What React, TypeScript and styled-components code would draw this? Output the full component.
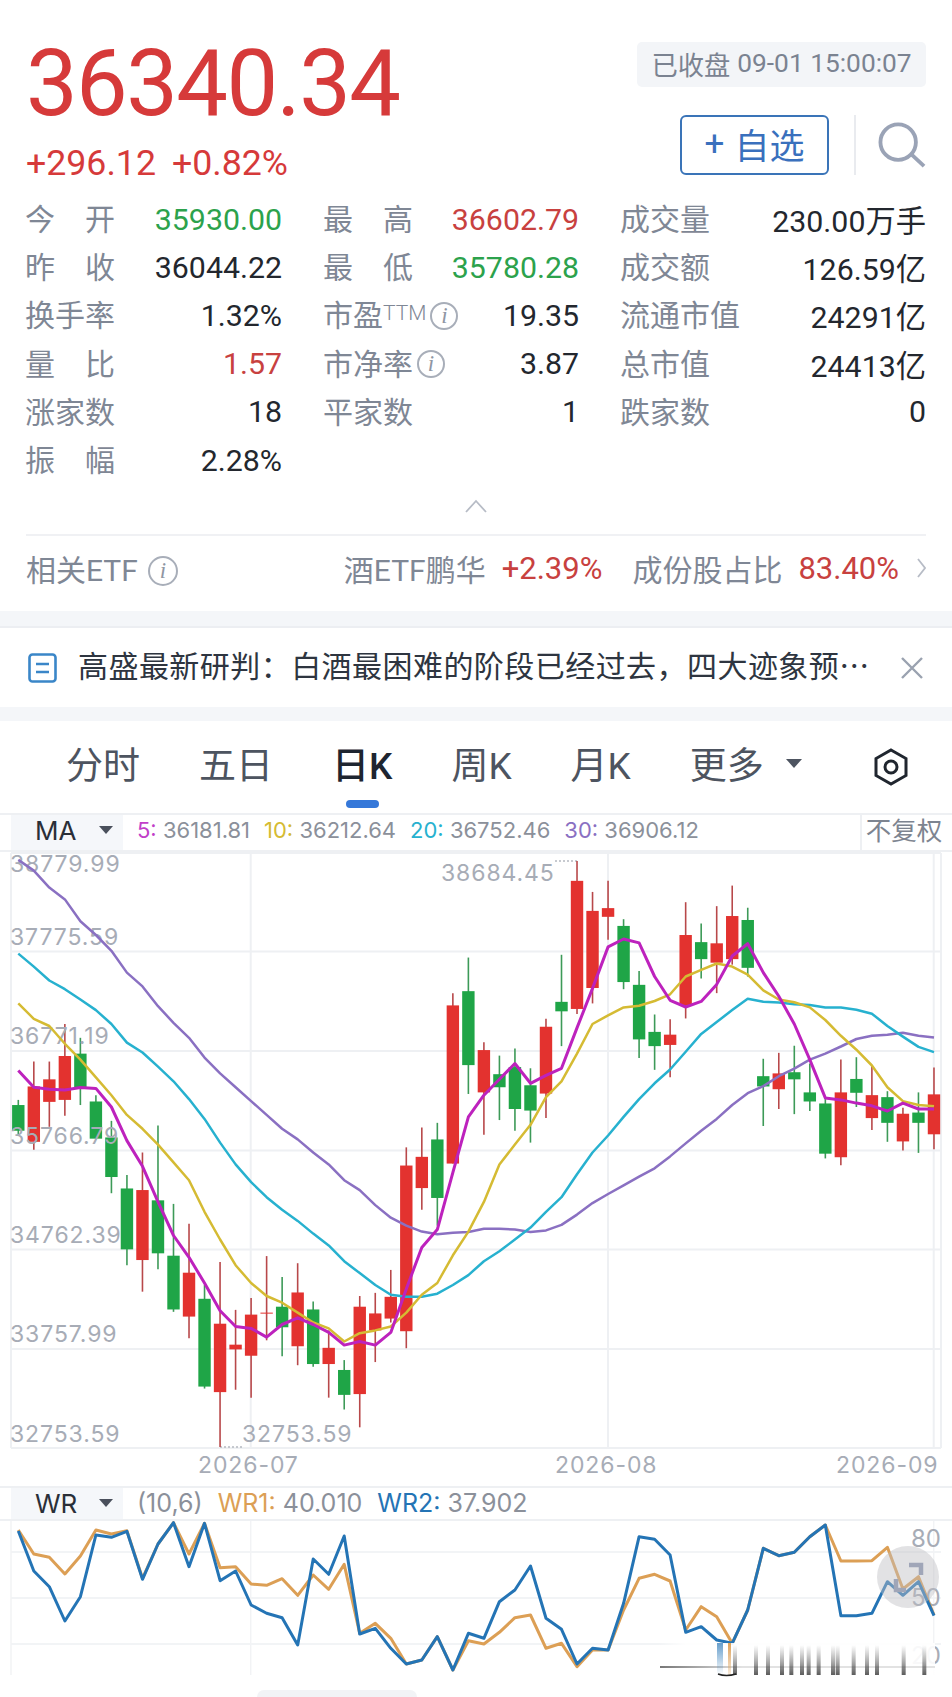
import styled, { createGlobalStyle } from "styled-components";

const GlobalStyle = createGlobalStyle`
  html, body {
    margin: 0;
    padding: 0;
    background: #fff;
    font-family: Roboto, "Noto Sans CJK SC", sans-serif;
  }
`;

const RED = "#d63a3a";
const GREEN = "#2ca24c";
const LABEL = "#7f8795";
const CHART_FONT = 'Inter, "Noto Sans CJK SC", sans-serif';

type Tone = "up" | "down" | "plain";

const toneColor = (tone?: Tone) =>
  tone === "up" ? "#c8413f" : tone === "down" ? GREEN : "#23272e";

const Page = styled.div`
  position: relative;
  width: 952px;
  height: 1697px;
  overflow: hidden;
  background: #fff;
`;

const QuoteHead = styled.header`
  height: 195px;
  padding: 42px 26px 0;
  box-sizing: border-box;
  display: flex;
  justify-content: space-between;
`;

const PriceBlock = styled.div`
  display: flex;
  flex-direction: column;
`;

const Price = styled.div`
  font-size: 92px;
  line-height: 82px;
  letter-spacing: -1.6px;
  color: ${RED};
  margin-top: 1px;
`;

const ChangeRow = styled.div`
  display: flex;
  gap: 16px;
  margin-top: 18px;
  font-size: 35.7px;
  line-height: 40px;
  color: ${RED};
`;

const HeadRight = styled.div`
  display: flex;
  flex-direction: column;
  align-items: flex-end;
`;

const StatusBadge = styled.div`
  width: 289px;
  height: 45px;
  box-sizing: border-box;
  padding-bottom: 3px;
  display: flex;
  align-items: center;
  justify-content: center;
  gap: 7px;
  background: #f3f5f8;
  border-radius: 5px;
  font-size: 26.3px;
  color: #7b8391;
  white-space: nowrap;
`;

const HeadActions = styled.div`
  display: flex;
  align-items: center;
  margin-top: 28px;
`;

const WatchButton = styled.button`
  width: 149px;
  height: 60px;
  border: 2px solid #3a74b8;
  border-radius: 6px;
  background: #fff;
  color: #3a70bd;
  font-family: inherit;
  font-size: 35px;
  padding: 0 0 4px;
  display: flex;
  align-items: center;
  justify-content: center;
  gap: 10px;
`;

const VDivider = styled.span`
  width: 2px;
  height: 60px;
  background: #e9ebef;
  margin: 0 22px 0 25px;
`;

const StatGrid = styled.section`
  display: grid;
  grid-template-columns: 256px 255px 305px;
  grid-auto-rows: 48.2px;
  column-gap: 42px;
  padding: 0 26px;
`;

const Stat = styled.div`
  display: flex;
  align-items: center;
  justify-content: space-between;
  white-space: nowrap;
`;

const StatLabel = styled.span<{ $spaced?: boolean }>`
  display: inline-flex;
  align-items: center;
  font-size: 30px;
  color: ${LABEL};
  margin-left: -1px;
  padding-bottom: 4px;
  width: ${(p) => (p.$spaced ? "90px" : "auto")};
  justify-content: ${(p) => (p.$spaced ? "space-between" : "flex-start")};
`;

const StatValue = styled.span<{ $tone?: Tone }>`
  font-size: 30.3px;
  color: ${(p) => toneColor(p.$tone)};
`;

const Sup = styled.sup`
  font-size: 21px;
  line-height: 1;
  font-weight: 300;
  vertical-align: 10px;
`;

const InfoDot = styled.i<{ $size?: number; $gap?: number }>`
  display: inline-flex;
  align-items: center;
  justify-content: center;
  width: ${(p) => p.$size ?? 28}px;
  height: ${(p) => p.$size ?? 28}px;
  margin-left: ${(p) => p.$gap ?? 4}px;
  margin-top: 5px;
  box-sizing: border-box;
  border: 2px solid #a8aeb9;
  border-radius: 50%;
  color: #8f96a3;
  font-family: "Liberation Serif", serif;
  font-size: 23px;
`;

const CollapseRow = styled.div`
  height: 51px;
  box-sizing: border-box;
  padding-bottom: 4px;
  display: flex;
  justify-content: center;
  align-items: center;
  margin-top: -1px;
`;

const EtfRow = styled.div`
  height: 77px;
  box-sizing: border-box;
  margin: 0 26px;
  padding-bottom: 11px;
  border-top: 2px solid #f0f1f4;
  display: flex;
  align-items: center;
  font-size: 30px;
  color: ${LABEL};
  white-space: nowrap;
`;

const EtfRight = styled.div`
  margin-left: auto;
  display: flex;
  align-items: center;
`;

const EtfChange = styled.span<{ $gap: number }>`
  color: #c8413f;
  font-size: 31px;
  margin-left: 16px;
  margin-right: ${(p) => p.$gap}px;
`;

const GrayBand = styled.div<{ $height: number; $line?: boolean }>`
  height: ${(p) => p.$height}px;
  box-sizing: border-box;
  background: #f4f6f9;
  border-bottom: ${(p) => (p.$line ? "2px solid #eceef2" : "none")};
`;

const NoticeBar = styled.div`
  height: 79px;
  padding: 0 28px;
  display: flex;
  align-items: center;
  gap: 20px;
`;

const NoticeText = styled.div`
  flex: 1;
  font-family: "Noto Sans CJK SC", sans-serif;
  font-size: 30px;
  line-height: 44px;
  padding-bottom: 8px;
  letter-spacing: 0.45px;
  color: #2e3540;
  white-space: nowrap;
`;

const TabBar = styled.nav`
  height: 92px;
  padding: 0 43px 8px 66px;
  box-sizing: border-box;
  display: flex;
  align-items: center;
  gap: 59px;
`;

const Tab = styled.span<{ $active?: boolean }>`
  position: relative;
  font-size: 37px;
  color: ${(p) => (p.$active ? "#1e2530" : "#4d5460")};
  font-weight: ${(p) => (p.$active ? 500 : 400)};
  white-space: nowrap;

  ${(p) =>
    p.$active &&
    `
    &::after {
      content: "";
      position: absolute;
      left: 14px;
      bottom: -18px;
      width: 33px;
      height: 8px;
      border-radius: 4px;
      background: #3578d9;
    }
  `}
`;

const TabMore = styled.div`
  display: flex;
  align-items: center;
  gap: 22px;
`;

const TabIcon = styled.div`
  margin-left: auto;
  display: flex;
  margin-top: 8px;
`;

const Caret = styled.span<{ $size: number; $color: string }>`
  display: inline-block;
  width: 0;
  height: 0;
  border-left: ${(p) => p.$size}px solid transparent;
  border-right: ${(p) => p.$size}px solid transparent;
  border-top: ${(p) => p.$size + 1}px solid ${(p) => p.$color};
`;

const IndicatorBar = styled.div<{ $height: number }>`
  height: ${(p) => p.$height}px;
  box-sizing: border-box;
  border-top: 2px solid #eef0f3;
  border-bottom: 2px solid #eef0f3;
  display: flex;
  align-items: center;
  padding-left: 11px;
  font-family: ${CHART_FONT};
  white-space: nowrap;
`;

const IndicatorSelect = styled.div<{ $lift: number }>`
  width: 112px;
  height: 100%;
  box-sizing: border-box;
  padding: 0 10px ${(p) => p.$lift}px 24px;
  background: #f5f7fa;
  display: flex;
  align-items: center;
  justify-content: space-between;
  font-size: 26px;
  color: #2a2f38;
`;

const IndicatorValues = styled.div<{ $size: number; $gap: number; $lift: number }>`
  display: flex;
  gap: ${(p) => p.$gap}px;
  margin-left: 14px;
  padding-bottom: ${(p) => p.$lift}px;
  font-size: ${(p) => p.$size}px;
  color: #8b909a;
`;

const SeriesLabel = styled.span<{ $color: string }>`
  color: ${(p) => p.$color};
`;

const AdjustCell = styled.div`
  margin-left: auto;
  width: 92px;
  height: 100%;
  box-sizing: border-box;
  padding: 0 6px 8px 0;
  border-left: 2px solid #eef0f3;
  display: flex;
  align-items: center;
  justify-content: center;
  font-family: "Noto Sans CJK SC", sans-serif;
  font-size: 25.5px;
  line-height: 30px;
  color: #7d8490;
`;

const ChartSvg = styled.svg`
  display: block;
  overflow: visible;
`;

const FloatButton = styled.div`
  position: absolute;
  left: 877px;
  top: 1546px;
  width: 62px;
  height: 62px;
  border-radius: 50%;
  background: rgba(190, 190, 196, 0.45);
`;

const HomePill = styled.div`
  width: 160px;
  height: 7px;
  margin-left: 257px;
  border-radius: 20px 20px 0 0;
  background: #f2f3f6;
`;

// [wick top, body top, body bottom, wick bottom, red?] read off the reference
const CANDLES: [number, number, number, number, boolean][] = [
  [632, 645, 710, 722, false],
  [535, 598, 738, 758, true],
  [535, 580, 637, 700, true],
  [440, 521, 632, 672, true],
  [475, 515, 600, 645, false],
  [620, 636, 730, 730, false],
  [685, 727, 827, 868, false],
  [822, 856, 1010, 1050, false],
  [765, 860, 1037, 1117, true],
  [697, 886, 1020, 1060, false],
  [895, 1026, 1162, 1168, false],
  [945, 1069, 1180, 1235, true],
  [1100, 1135, 1357, 1362, false],
  [1042, 1198, 1371, 1510, true],
  [1163, 1251, 1263, 1365, true],
  [1133, 1175, 1279, 1385, true],
  [1027, 1170, 1172, 1240, true],
  [1080, 1155, 1207, 1280, false],
  [1045, 1119, 1255, 1303, true],
  [1142, 1162, 1300, 1307, false],
  [1215, 1259, 1300, 1385, true],
  [1290, 1315, 1378, 1415, false],
  [1128, 1155, 1376, 1460, true],
  [1120, 1172, 1215, 1295, true],
  [1062, 1130, 1185, 1195, true],
  [752, 798, 1217, 1260, true],
  [702, 776, 855, 910, true],
  [690, 732, 880, 950, false],
  [362, 393, 793, 793, true],
  [272, 357, 544, 617, false],
  [486, 506, 613, 720, true],
  [520, 567, 600, 683, false],
  [502, 549, 655, 710, false],
  [552, 595, 659, 740, false],
  [427, 447, 616, 678, true],
  [265, 384, 408, 496, false],
  [28, 78, 402, 415, true],
  [106, 154, 349, 388, true],
  [78, 147, 169, 227, true],
  [175, 192, 334, 352, false],
  [306, 341, 479, 526, false],
  [416, 460, 496, 556, false],
  [428, 467, 493, 575, true],
  [132, 215, 392, 426, true],
  [186, 233, 276, 325, false],
  [142, 236, 285, 362, true],
  [90, 167, 276, 290, true],
  [146, 177, 298, 320, false],
  [528, 572, 598, 698, false],
  [513, 565, 605, 655, true],
  [495, 562, 580, 668, false],
  [540, 613, 636, 660, false],
  [630, 641, 768, 780, false],
  [530, 613, 777, 797, true],
  [524, 579, 614, 650, false],
  [545, 620, 678, 708, true],
  [610, 625, 690, 738, false],
  [652, 667, 737, 760, true],
  [613, 664, 690, 766, false],
  [550, 618, 719, 757, true],
];

const MA5 = [
  558, 600, 605, 607, 601, 603, 650, 735, 800, 890, 975, 1030, 1095, 1165, 1205, 1210, 1232, 1200, 1183,
  1200, 1220, 1252, 1243, 1252, 1220, 1110, 1005, 960, 815, 675, 620, 580, 540, 590, 570, 552, 450, 350,
  245, 225, 235, 320, 380, 397, 383, 340, 268, 237, 310, 370, 440, 530, 627, 632, 640, 647, 660, 640, 655,
  655,
];
const MA10 = [
  388, 427, 445, 490, 530, 575, 620, 670, 705, 745, 790, 835, 915, 985, 1050, 1095, 1128, 1145, 1170, 1195,
  1210, 1243, 1222, 1215, 1205, 1170, 1125, 1095, 1025, 965, 890, 795, 745, 695, 625, 585, 515, 440, 418,
  398, 394, 382, 365, 320, 303, 287, 295, 315, 355, 378, 385, 398, 430, 470, 505, 545, 600, 635, 645, 648,
];
const MA20 = [
  262, 295, 330, 352, 378, 405, 440, 487, 512, 548, 585, 630, 680, 740, 795, 840, 878, 910, 938, 970, 1000,
  1040, 1070, 1100, 1125, 1130, 1130, 1122, 1100, 1075, 1040, 1015, 985, 955, 915, 878, 820, 765, 722, 675,
  630, 590, 555, 510, 465, 435, 405, 376, 384, 386, 390, 392, 398, 398, 404, 414, 445, 472, 498, 511,
];
const MA30 = [
  25, 52, 95, 125, 180, 215, 255, 310, 345, 395, 437, 475, 525, 565, 600, 635, 670, 705, 732, 765, 795, 835,
  860, 898, 930, 950, 965, 972, 968, 966, 958, 958, 960, 966, 962, 948, 922, 893, 870, 848, 826, 805, 775,
  742, 710, 680, 645, 615, 597, 572, 553, 530, 515, 497, 478, 470, 467, 462, 470, 474,
];
const WR1 = [
  180, 252, 262, 312, 258, 180, 192, 182, 325, 222, 158, 252, 160, 293, 290, 342, 346, 326, 376, 315, 358,
  283, 490, 460, 505, 582, 570, 500, 600, 512, 522, 487, 443, 435, 535, 520, 590, 540, 540, 420, 325, 313,
  333, 480, 410, 440, 520, 420, 235, 257, 247, 200, 165, 273, 273, 272, 232, 357, 320, 435,
];
const WR2 = [
  183, 303, 350, 453, 380, 195, 202, 184, 328, 222, 158, 290, 160, 332, 303, 405, 430, 443, 525, 267, 313,
  198, 492, 475, 535, 582, 570, 500, 600, 490, 505, 395, 360, 288, 445, 478, 582, 535, 540, 400, 200, 208,
  255, 487, 470, 510, 520, 420, 235, 257, 247, 200, 165, 437, 437, 430, 335, 376, 335, 437,
];

const candleX = (i: number) => 18.3 + 15.52 * i;
const priceY = (y: number) => 850 + y / 2.529;
const wrY = (y: number) => 1470 + y / 3;
const points = (ys: number[], toY: (y: number) => number) =>
  ys.map((y, i) => `${candleX(i).toFixed(1)},${toY(y).toFixed(1)}`).join(" ");

const GRID_Y = [853, 951.6, 1050.9, 1150.5, 1249.4, 1349, 1448];
const GRID_X = [250.7, 608, 933.7];
const AXIS_LABELS: [string, number][] = [
  ["38779.99", 872],
  ["37775.59", 945],
  ["36771.19", 1044],
  ["35766.79", 1144],
  ["34762.39", 1243],
  ["33757.99", 1342],
  ["32753.59", 1442],
];

const PriceChart = () => (
  <ChartSvg width={952} height={634} viewBox="0 852 952 634">
    {GRID_Y.map((y) => (
      <line key={y} x1={11} x2={941} y1={y} y2={y} stroke="#eef0f3" strokeWidth={2} />
    ))}
    {[11, ...GRID_X, 941].map((x) => (
      <line key={x} x1={x} x2={x} y1={853} y2={1448} stroke="#eef0f3" strokeWidth={2} />
    ))}
    <line x1={555} x2={577} y1={861} y2={861} stroke="#b5b9c1" strokeWidth={1.5} strokeDasharray="2 2" />
    <line x1={220} x2={242} y1={1447} y2={1447} stroke="#b5b9c1" strokeWidth={1.5} strokeDasharray="2 2" />
    {CANDLES.map(([top, open, close, bottom, up], i) => {
      const x = candleX(i);
      const color = up ? "#e3322f" : "#1fa547";
      return (
        <g key={i}>
          <line x1={x} x2={x} y1={priceY(top)} y2={priceY(bottom)} stroke={up ? "#b8484a" : "#3d9a58"} strokeWidth={1.6} />
          <rect x={x - 6.2} y={priceY(open)} width={12.4} height={Math.max(priceY(close) - priceY(open), 1)} fill={color} />
        </g>
      );
    })}
    <g fontFamily={CHART_FONT} fontSize={23} fill="#a7acb6" letterSpacing={0.9}>
      {AXIS_LABELS.map(([text, y]) => (
        <text key={text} x={10} y={y}>
          {text}
        </text>
      ))}
      <text x={441} y={881}>38684.45</text>
      <text x={242} y={1442}>32753.59</text>
      <text x={198} y={1473}>2026-07</text>
      <text x={555} y={1473}>2026-08</text>
      <text x={836} y={1473}>2026-09</text>
    </g>
    <g fill="none" strokeLinejoin="round">
      <polyline points={points(MA30, priceY)} stroke="#8a70c2" strokeWidth={2.5} />
      <polyline points={points(MA20, priceY)} stroke="#27b1cf" strokeWidth={2.5} />
      <polyline points={points(MA10, priceY)} stroke="#d5bb33" strokeWidth={2.5} />
      <polyline points={points(MA5, priceY)} stroke="#bd22bd" strokeWidth={3} />
    </g>
  </ChartSvg>
);

const WATERMARK_BARS = [852, 888, 930, 958, 990, 1010, 1040, 1083, 1097, 1145, 1185, 1215, 1295, 1357];

const WrChart = () => (
  <ChartSvg width={952} height={169} viewBox="0 1521 952 169">
    <defs>
      <linearGradient id="barFade" x1="0" y1="0" x2="0" y2="1">
        <stop offset="0" stopColor="#555" stopOpacity={0} />
        <stop offset="1" stopColor="#333" stopOpacity={0.8} />
      </linearGradient>
      <linearGradient id="blueFade" x1="0" y1="0" x2="0" y2="1">
        <stop offset="0" stopColor="#2474b5" stopOpacity={0.7} />
        <stop offset="1" stopColor="#2474b5" stopOpacity={0} />
      </linearGradient>
      <linearGradient id="orangeFade" x1="0" y1="0" x2="0" y2="1">
        <stop offset="0" stopColor="#dc9f55" stopOpacity={1} />
        <stop offset="1" stopColor="#dc9f55" stopOpacity={0.2} />
      </linearGradient>
      <linearGradient id="veil" x1="0" y1="0" x2="1" y2="0">
        <stop offset="0" stopColor="#fff" stopOpacity={0} />
        <stop offset="0.1" stopColor="#fff" stopOpacity={0.92} />
        <stop offset="1" stopColor="#fff" stopOpacity={0.92} />
      </linearGradient>
      <linearGradient id="baseLine" x1="0" y1="0" x2="1" y2="0">
        <stop offset="0" stopColor="#777" />
        <stop offset="0.3" stopColor="#e2e2e2" />
        <stop offset="1" stopColor="#e2e2e2" />
      </linearGradient>
    </defs>
    {[1552, 1598, 1644].map((y) => (
      <line key={y} x1={11} x2={941} y1={y} y2={y} stroke="#eef0f3" strokeWidth={1.5} />
    ))}
    {[11, 250.7, 933.7].map((x) => (
      <line key={x} x1={x} x2={x} y1={1521} y2={1675} stroke="#f2f3f5" strokeWidth={1.5} />
    ))}
    <g fontFamily={CHART_FONT} fontSize={24} fill="#a7acb6">
      <text x={911} y={1547}>80</text>
      <text x={911} y={1606}>50</text>
      <text x={911} y={1664}>20</text>
    </g>
    <polyline points={points(WR1, wrY)} fill="none" stroke="#dc9f55" strokeWidth={3} strokeLinejoin="round" />
    <polyline points={points(WR2, wrY)} fill="none" stroke="#2474b5" strokeWidth={3} strokeLinejoin="round" />
    <rect x={658} y={1643} width={277} height={36} fill="url(#veil)" />
    <rect x={660} y={1666} width={275} height={2} fill="url(#baseLine)" />
    {WATERMARK_BARS.map((x) => (
      <rect key={x} x={472 + x / 3 - 2} y={1645} width={4} height={30} fill="url(#barFade)" />
    ))}
    <rect x={717} y={1643} width={6} height={32} fill="url(#blueFade)" />
    <rect x={728} y={1643} width={3} height={32} fill="url(#orangeFade)" />
    <rect x={733} y={1645} width={4} height={30} fill="url(#barFade)" />
    <path d="M718 1674q8 3 18 0" fill="none" stroke="#222" strokeWidth={1.5} />
  </ChartSvg>
);

const Chevron = ({ d, width, height, color }: { d: string; width: number; height: number; color: string }) => (
  <svg width={width} height={height} viewBox={`0 0 ${width} ${height}`} fill="none" stroke={color} strokeWidth={1.8}>
    <path d={d} />
  </svg>
);

type StatItem = {
  label: string;
  chars?: [string, string];
  value: string;
  tone?: Tone;
  sup?: string;
  info?: boolean;
};

const STATS: StatItem[] = [
  { label: "今开", chars: ["今", "开"], value: "35930.00", tone: "down" },
  { label: "最高", chars: ["最", "高"], value: "36602.79", tone: "up" },
  { label: "成交量", value: "230.00万手" },
  { label: "昨收", chars: ["昨", "收"], value: "36044.22" },
  { label: "最低", chars: ["最", "低"], value: "35780.28", tone: "down" },
  { label: "成交额", value: "126.59亿" },
  { label: "换手率", value: "1.32%" },
  { label: "市盈", sup: "TTM", info: true, value: "19.35" },
  { label: "流通市值", value: "24291亿" },
  { label: "量比", chars: ["量", "比"], value: "1.57", tone: "up" },
  { label: "市净率", info: true, value: "3.87" },
  { label: "总市值", value: "24413亿" },
  { label: "涨家数", value: "18" },
  { label: "平家数", value: "1" },
  { label: "跌家数", value: "0" },
  { label: "振幅", chars: ["振", "幅"], value: "2.28%" },
];

const TABS = ["分时", "五日", "日K", "周K", "月K"];

const App = () => {
  return (
    <Page>
      <GlobalStyle />
      <QuoteHead>
        <PriceBlock>
          <Price>36340.34</Price>
          <ChangeRow>
            <span>+296.12</span>
            <span>+0.82%</span>
          </ChangeRow>
        </PriceBlock>
        <HeadRight>
          <StatusBadge>
            <span>已收盘</span>
            <span>09-01 15:00:07</span>
          </StatusBadge>
          <HeadActions>
            <WatchButton>
              <span>+</span>
              <span>自选</span>
            </WatchButton>
            <VDivider />
            <svg width={48} height={46} viewBox="0 0 50 48" fill="none" stroke="#9aa3b6" strokeWidth={4}>
              <circle cx={21} cy={21} r={18.5} />
              <path d="M34 33l14 13" />
            </svg>
          </HeadActions>
        </HeadRight>
      </QuoteHead>

      <StatGrid>
        {STATS.map((s) => (
          <Stat key={s.label}>
            <StatLabel $spaced={!!s.chars}>
              {s.chars ? (
                <>
                  <span>{s.chars[0]}</span>
                  <span>{s.chars[1]}</span>
                </>
              ) : (
                s.label
              )}
              {s.sup && <Sup>{s.sup}</Sup>}
              {s.info && <InfoDot>i</InfoDot>}
            </StatLabel>
            <StatValue $tone={s.tone}>{s.value}</StatValue>
          </Stat>
        ))}
      </StatGrid>

      <CollapseRow>
        <Chevron d="M1 13L11 2l10 11" width={22} height={15} color="#b7bcc6" />
      </CollapseRow>

      <EtfRow>
        <span>相关ETF</span>
        <InfoDot $size={30} $gap={10}>i</InfoDot>
        <EtfRight>
          <span>酒ETF鹏华</span>
          <EtfChange $gap={30}>+2.39%</EtfChange>
          <span>成份股占比</span>
          <EtfChange $gap={18}>83.40%</EtfChange>
          <Chevron d="M1 1l7 9-7 9" width={9} height={20} color="#b7bcc6" />
        </EtfRight>
      </EtfRow>

      <GrayBand $height={17} $line />

      <NoticeBar>
        <svg width={30} height={30} viewBox="0 0 30 30" fill="none" stroke="#3a86c8" strokeWidth={2.6}>
          <rect x={1.5} y={1.5} width={26} height={27} rx={3} />
          <path d="M8 11h13M8 19h13" />
        </svg>
        <NoticeText>高盛最新研判：白酒最困难的阶段已经过去，四大迹象预…</NoticeText>
        <svg width={24} height={24} viewBox="0 0 24 24" fill="none" stroke="#9aa2b0" strokeWidth={2.4}>
          <path d="M2 2l20 20M22 2L2 22" />
        </svg>
      </NoticeBar>

      <GrayBand $height={14} />

      <TabBar>
        {TABS.map((t) => (
          <Tab key={t} $active={t === "日K"}>
            {t}
          </Tab>
        ))}
        <TabMore>
          <Tab>更多</Tab>
          <Caret $size={8} $color="#4d5460" />
        </TabMore>
        <TabIcon>
          <svg width={36} height={38} viewBox="0 0 36 38" fill="none" stroke="#20262f" strokeWidth={3}>
            <path d="M18 2l15 8.500v17L18 36 3 27.500v-17z" />
            <circle cx={18} cy={19} r={6} />
          </svg>
        </TabIcon>
      </TabBar>

      <IndicatorBar $height={39}>
        <IndicatorSelect $lift={5}>
          MA
          <Caret $size={7} $color="#4a505c" />
        </IndicatorSelect>
        <IndicatorValues $size={22} $gap={14} $lift={5}>
          <span>
            <SeriesLabel $color="#c13fc9">5:</SeriesLabel> 36181.81
          </span>
          <span>
            <SeriesLabel $color="#d5bb33">10:</SeriesLabel> 36212.64
          </span>
          <span>
            <SeriesLabel $color="#27b1cf">20:</SeriesLabel> 36752.46
          </span>
          <span>
            <SeriesLabel $color="#8a70c2">30:</SeriesLabel> 36906.12
          </span>
        </IndicatorValues>
        <AdjustCell>不复权</AdjustCell>
      </IndicatorBar>

      <PriceChart />

      <IndicatorBar $height={35}>
        <IndicatorSelect $lift={1}>
          WR
          <Caret $size={7} $color="#4a505c" />
        </IndicatorSelect>
        <IndicatorValues $size={25} $gap={15} $lift={1}>
          <span>(10,6)</span>
          <span>
            <SeriesLabel $color="#dc9f55">WR1:</SeriesLabel> 40.010
          </span>
          <span>
            <SeriesLabel $color="#2474b5">WR2:</SeriesLabel> 37.902
          </span>
        </IndicatorValues>
      </IndicatorBar>

      <WrChart />
      <HomePill />

      <FloatButton>
        <svg width={62} height={62} viewBox="0 0 62 62" fill="none" stroke="#a0a6b8" strokeWidth={4.5}>
          <path d="M32 19h12v10M19 33v11h10" />
        </svg>
      </FloatButton>
    </Page>
  );
};

export default App;
